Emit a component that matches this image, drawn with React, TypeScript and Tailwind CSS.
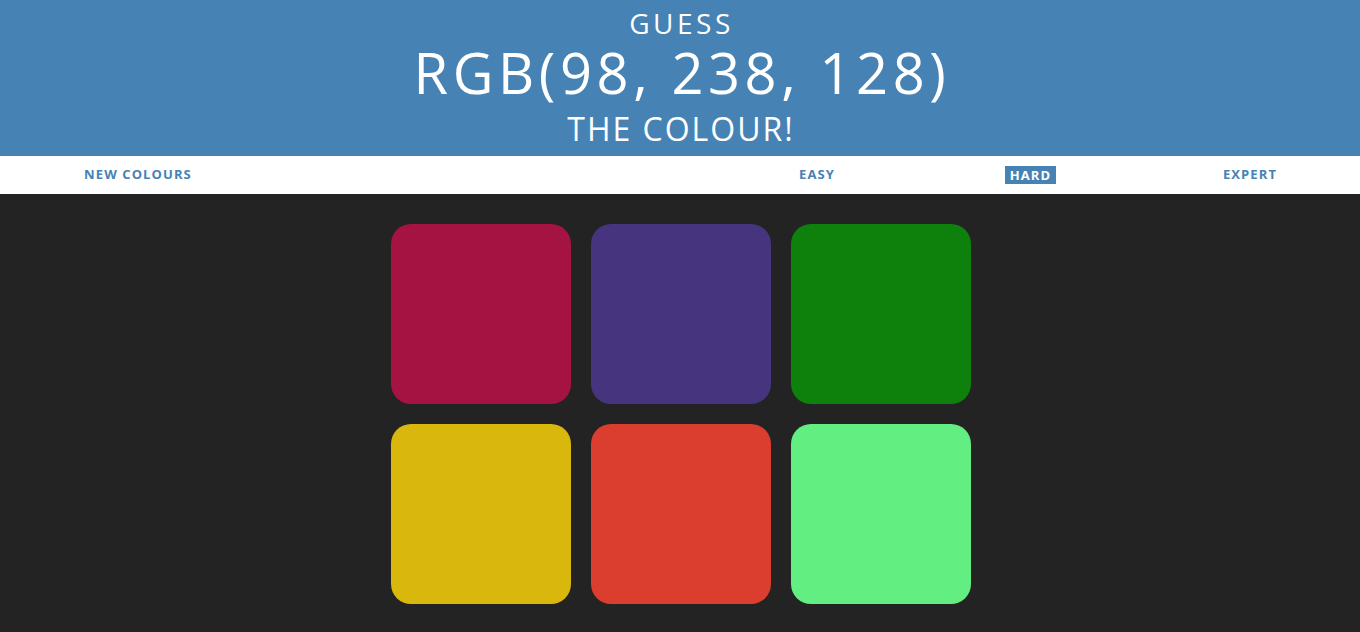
const squares = [
  "bg-[#a51343]",
  "bg-[#46357e]",
  "bg-[#0e800c]",
  "bg-[#d9b70d]",
  "bg-[#db3e2e]",
  "bg-[#62ee80]",
];

export default function App() {
  return (
    <div className="min-h-[632px] bg-[#232323] font-['Open_Sans',sans-serif]">
      <header className="flex h-[156px] flex-col items-center bg-[#4682b4] pt-[6px] text-white">
        <div className="pl-[3px] text-[28px] leading-[34px] tracking-[3.5px]">GUESS</div>
        <div className="pl-[4px] text-[56px] leading-[64px] tracking-[4.6px]">RGB(98, 238, 128)</div>
        <div className="pl-[2px] text-[32px] leading-[49px] tracking-[2px]">THE COLOUR!</div>
      </header>
      <nav className="flex h-[38px] items-center bg-white pl-[78px] text-[13px] font-bold tracking-[1.1px] text-[#4682b4]">
        <button className="w-[120px] text-center">NEW COLOURS</button>
        <button className="ml-[559px] w-[120px] text-center">EASY</button>
        <div className="ml-[92px] flex w-[120px] justify-center">
          <button className="mb-[1px] ml-[3px] h-[18px] bg-[#4682b4] px-[5px] leading-[18px] text-white">HARD</button>
        </div>
        <button className="ml-[101px] w-[120px] text-center">EXPERT</button>
      </nav>
      <main className="flex justify-center pl-[2px] pt-[30px]">
        <div className="grid grid-cols-3 gap-[20px]">
          {squares.map((c, i) => (
            <div key={i} className={`h-[180px] w-[180px] rounded-[20px] ${c}`} />
          ))}
        </div>
      </main>
    </div>
  );
}
